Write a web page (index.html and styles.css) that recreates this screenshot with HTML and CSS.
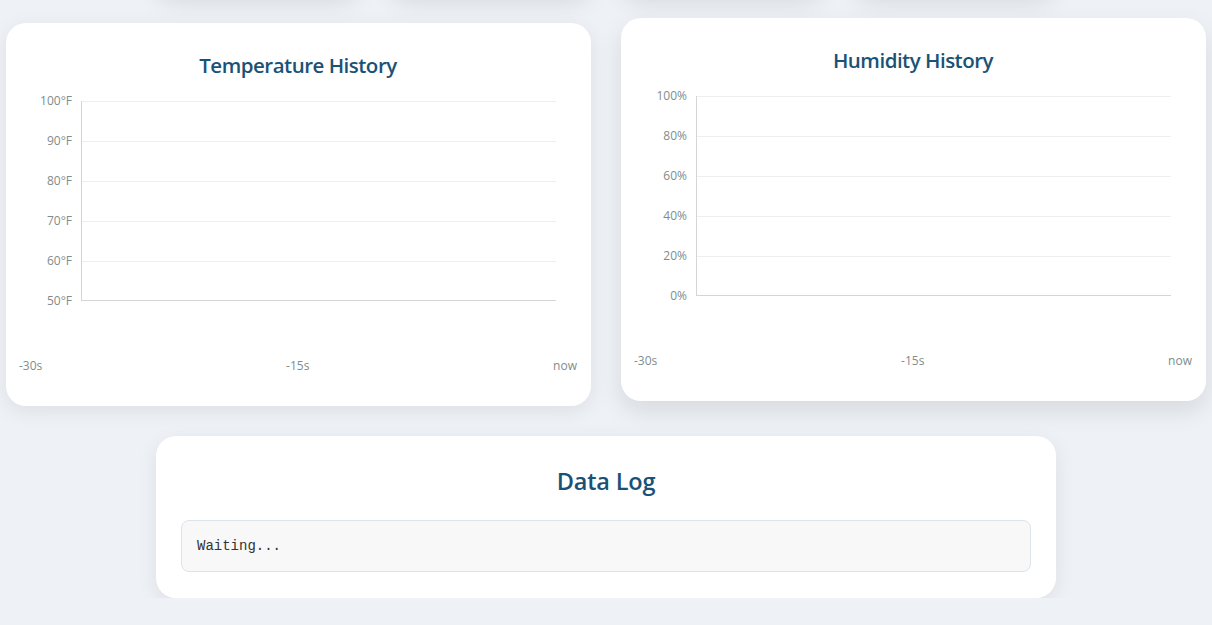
FILE: index.html
```html
<!DOCTYPE html>
<html lang="en">
<head>
<meta charset="utf-8">
<title>Sensor Dashboard</title>
<link rel="stylesheet" href="styles.css">
</head>
<body>
<div class="dashboard">
  <div class="stats">
    <div class="card stat-card"></div>
    <div class="card stat-card"></div>
    <div class="card stat-card"></div>
    <div class="card stat-card"></div>
  </div>

  <div class="charts">
    <div class="card chart-card">
      <h2 class="card-title">Temperature History</h2>
      <div class="chart">
        <div class="y-axis">
          <span>100°F</span><span>90°F</span><span>80°F</span><span>70°F</span><span>60°F</span><span>50°F</span>
        </div>
        <div class="plot">
          <div class="grid-row"></div><div class="grid-row"></div><div class="grid-row"></div><div class="grid-row"></div><div class="grid-row"></div>
        </div>
      </div>
      <div class="x-axis"><span>-30s</span><span>-15s</span><span>now</span></div>
    </div>

    <div class="card chart-card lifted">
      <h2 class="card-title">Humidity History</h2>
      <div class="chart">
        <div class="y-axis">
          <span>100%</span><span>80%</span><span>60%</span><span>40%</span><span>20%</span><span>0%</span>
        </div>
        <div class="plot">
          <div class="grid-row"></div><div class="grid-row"></div><div class="grid-row"></div><div class="grid-row"></div><div class="grid-row"></div>
        </div>
      </div>
      <div class="x-axis"><span>-30s</span><span>-15s</span><span>now</span></div>
    </div>
  </div>

  <div class="card log-card">
    <h2 class="log-title">Data Log</h2>
    <div class="log-box">Waiting...</div>
  </div>
</div>
</body>
</html>
```

FILE: styles.css
```css
* {
  box-sizing: border-box;
}

html, body {
  margin: 0;
  padding: 0;
}

body {
  background: #eef2f7;
  font-family: "Open Sans", "Noto Sans", "DejaVu Sans", sans-serif;
  color: #333;
  overflow: hidden;
}

.dashboard {
  max-width: 1200px;
  margin: 0 auto;
}

.card {
  background: #fff;
  border-radius: 20px;
  box-shadow: 0 5px 20px rgba(0, 0, 0, 0.08);
}

.stats {
  max-width: 900px;
  margin: -127px auto 0;
  display: grid;
  grid-template-columns: repeat(4, 1fr);
  gap: 30px;
}

.stat-card {
  height: 120px;
  box-shadow: 0 9px 25px rgba(0, 0, 0, 0.1);
}

.charts {
  margin-top: 30px;
  display: grid;
  grid-template-columns: 1fr 1fr;
  gap: 30px;
}

.chart-card {
  padding: 27px 14px 33px 13px;
}

.chart-card.lifted {
  transform: translateY(-5px);
  box-shadow: 0 10px 25px rgba(0, 0, 0, 0.1);
}

.card-title {
  margin: 0;
  text-align: center;
  font-size: 20.5px;
  letter-spacing: -0.5px;
  line-height: 30px;
  font-weight: 600;
  color: #1a5276;
}

.chart {
  margin-top: 21px;
  display: grid;
  grid-template-columns: 53px 475px;
  column-gap: 9px;
}

.y-axis {
  margin: -7px 0;
  display: flex;
  flex-direction: column;
  justify-content: space-between;
  align-items: flex-end;
  font-size: 12px;
  line-height: 14px;
  color: #7f8c8d;
}

.plot {
  display: grid;
  grid-template-rows: repeat(4, 40px) 39px;
  border-left: 1px solid #d5d5d5;
  border-bottom: 1px solid #d5d5d5;
}

.grid-row {
  border-top: 1px solid #eeeeee;
}

.x-axis {
  margin-top: 58px;
  display: flex;
  justify-content: space-between;
  font-size: 12px;
  line-height: 14px;
  color: #7f8c8d;
}

.log-card {
  max-width: 900px;
  margin: 30px auto 0;
  padding: 29px 25px 26px;
}

.log-title {
  margin: 0 0 22px;
  text-align: center;
  font-size: 23.5px;
  letter-spacing: -0.2px;
  line-height: 33px;
  font-weight: 600;
  color: #1a5276;
}

.log-box {
  background: #f8f8f8;
  border: 1px solid #dde3ea;
  border-radius: 8px;
  padding: 15px;
  font-family: "Liberation Mono", "Courier New", monospace;
  font-size: 14px;
  line-height: 20px;
  color: #333;
}
```
